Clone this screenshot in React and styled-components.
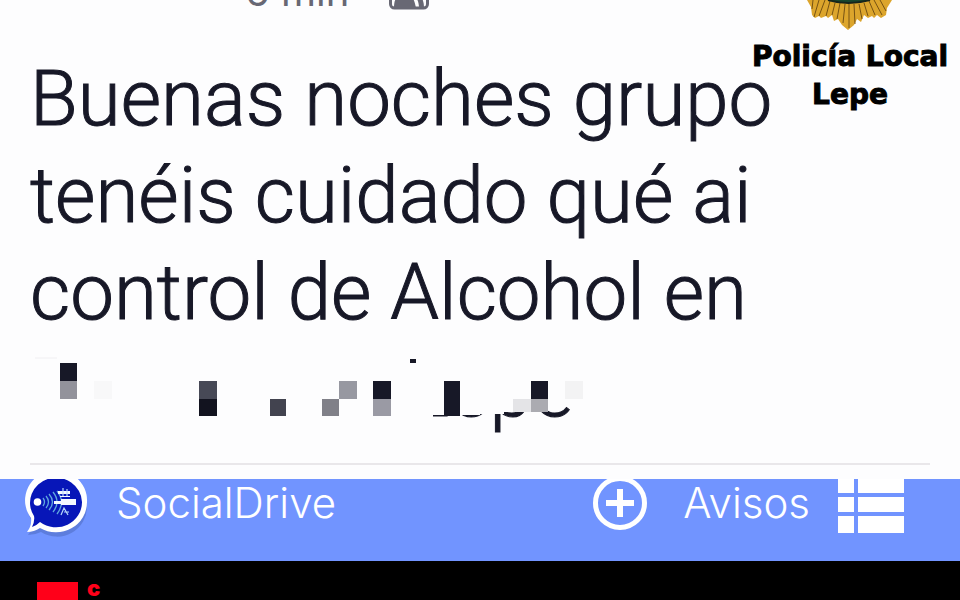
import React from 'react';
import styled, { createGlobalStyle } from 'styled-components';

const GlobalStyle = createGlobalStyle`
  * {
    box-sizing: border-box;
  }
  body {
    margin: 0;
    background-color: #000;
    font-family: Inter, 'Liberation Sans', sans-serif;
  }
`;

const Page = styled.main`
  position: relative;
  height: 100vh;
  overflow: hidden;
  background-color: #000;
`;

const Post = styled.article`
  padding: 0 30px 14px;
  background-color: #fdfdfe;
`;

const Meta = styled.div`
  display: flex;
  align-items: flex-end;
  gap: 40px;
  height: 10px;
  margin-bottom: 40px;
  padding-left: 215px;
  overflow: hidden;
  font-size: 40px;
  line-height: 36px;
  color: #686874;
`;

const Message = styled.p`
  margin: 0;
  font-family: Roboto, Inter, sans-serif;
  font-size: 78px;
  font-weight: 300;
  line-height: 97px;
  color: #171827;
  -webkit-text-stroke: 1px #171827;
`;

const Redacted = styled(Message)`
  position: relative;
  padding-left: 378px;
`;

const Mosaic = styled.svg`
  position: absolute;
  top: 0;
  left: 0;
`;

const Divider = styled.hr`
  margin: 25px 0 0;
  border: 0;
  border-top: 2px solid #e9e7ea;
`;

const Brand = styled.aside`
  position: absolute;
  top: 0;
  right: 10px;
  width: 200px;
  font-family: 'DejaVu Sans', sans-serif;
  font-size: 28px;
  font-weight: 700;
  line-height: 38px;
  color: #000;
  text-align: center;
  white-space: nowrap;
  -webkit-text-stroke: 1px #000;
`;

const Crest = styled.svg`
  display: block;
  margin: 0 auto 6px;
`;

const Bar = styled.nav`
  display: flex;
  align-items: flex-start;
  padding: 0 56px 24px 24px;
  background-color: #7194ff;
`;

const BarLink = styled.a`
  display: flex;
  align-items: flex-start;
  gap: 28px;
  margin-right: ${props => (props.$first ? 'auto' : '0')};
  font-size: 42px;
  font-weight: 350;
  line-height: 48px;
  color: #fff;
  text-decoration: none;
`;

const AddButton = styled.button`
  margin: 0 36px 0 0;
  padding: 0;
  border: 0;
  background: transparent;
  cursor: pointer;
`;

const Icon = styled.svg`
  display: block;
  flex: none;
`;

const Footer = styled.footer`
  display: flex;
  gap: 9px;
  padding: 21px 37px 0;
  font-size: 22px;
  font-weight: 900;
  line-height: 12px;
  color: #ff0019;
`;

const Swatch = styled.span`
  width: 41px;
  height: 41px;
  background-color: #ff0019;
`;

const blocks = [
  [30, 18, 17, 18, '#171827'],
  [30, 36, 17, 18, '#92929b'],
  [64, 36, 18, 18, '#f8f8f9'],
  [169, 36, 18, 18, '#474956'],
  [169, 54, 18, 17, '#12131f'],
  [240, 54, 16, 17, '#42434f'],
  [309, 36, 18, 18, '#9798a1'],
  [292, 54, 17, 17, '#808088'],
  [343, 36, 18, 18, '#171827'],
  [343, 54, 18, 17, '#9a9aa4'],
  [414, 36, 16, 35, '#171827'],
  [501, 36, 17, 18, '#171827'],
  [483, 54, 18, 13, '#e4e4e7'],
  [501, 54, 17, 13, '#ababb1'],
  [535, 36, 18, 18, '#f3f3f4'],
];

function Friends() {
  return (
    <Icon width="40" height="24" viewBox="0 0 40 24" fill="none">
      <rect x="1.5" y="-14" width="37" height="36" rx="4" stroke="#686874" strokeWidth="3" />
      <path d="M5 22c0-6 1-9 4-12h13c3 3 4 7 5 12zM25 9h5c4 3 5 8 5 13h-5c0-6-2-10-5-13z" fill="#686874" />
    </Icon>
  );
}

function Logo() {
  return (
    <Icon width="64" height="58" viewBox="24 479 64 58">
      <path d="M86 504a30 30 0 0 1-46 26q-6 3-13 3 5-6 4-14a30 30 0 1 1 55-15" fill="#39549d" opacity=".35" transform="translate(1 2)" />
      <path d="M87 502a31 30 0 0 1-47 26q-6 4-13 4 5-6 4-14a31 30 0 1 1 56-16" fill="#fff" />
      <path d="M82 502a26 25 0 0 1-42 20q-4 4-8 5 3-6 2-11a26 25 0 1 1 48-14" fill="#0716b8" />
      <circle cx="37.5" cy="502" r="3.8" fill="#fff" />
      <g fill="none" stroke="#61a8dd" strokeWidth="1.3">
        <path d="M43 498q3 4 0 8M46 496q5 6 0 12M49 494q7 8 0 16M53 492q8 10 0 20M57 491q9 11 0 23" />
      </g>
      <path d="M61 499h15v6H61v-1h-7v-3h7zM58 491h12v3H58zM60 496h10v1H60z" fill="#f4f9ff" />
      <path d="M63 488v8M67 489v7M61 515l3-7 4 7M64 512h5" fill="none" stroke="#b8d8fa" strokeWidth="1.2" />
    </Icon>
  );
}

function App() {
  return (
    <>
      <GlobalStyle />
      <Page>
        <Post>
          <Meta>
            <span>6 min</span>
            <Friends />
          </Meta>
          <Message>
            Buenas noches grupo
            <br />
            tenéis cuidado qué ai
            <br />
            control de Alcohol en
          </Message>
          <Redacted>
            Lepe
            <Mosaic width="600" height="97" viewBox="0 -4 600 97">
              <path d="M0 -4H600V60H543L513 67L495 66L492 67H474V69H450V70H403V100H0z" fill="#fdfdfe" />
              <path d="M380 14h6v4h-6z" fill="#171827" />
              <path d="M5 13h22" stroke="#f0eff2" />
              {blocks.map(([x, y, w, h, fill]) => (
                <rect key={`${x}-${y}`} x={x} y={y} width={w} height={h} fill={fill} />
              ))}
            </Mosaic>
          </Redacted>
          <Divider />
        </Post>
        <Brand>
          <Crest width="86" height="32" viewBox="807 0 86 32">
            <path
              d="M807 0l4 7 1 8 3 3 4-2 2 2 5-2 2 2 4-3 2 6 4-2 4 6 6 5 6-5 3-6 4 3 3-7 4 3 4-2 2 2 3-3 4 3 5-3 1-7 5-8z"
              fill="#dca52c"
            />
            <path
              d="M819 0l-5 17M825 0l-6 16M830 1l-4 15M835 3l-3 12M840 3l-3 16M845 4l-2 19M849 4v24M854 4l1 20M859 4l3 15M864 3l4 13M869 1l6 14M874 0l8 15M880 0l6 11M813 0l-1 9"
              stroke="#765213"
              strokeWidth="1"
            />
            <path d="M828 0q20 6 42 0" fill="#17472f" stroke="#16251c" strokeWidth="2" />
          </Crest>
          Policía Local
          <br />
          Lepe
        </Brand>
        <Bar>
          <BarLink href="#socialdrive" $first>
            <Logo />
            SocialDrive
          </BarLink>
          <AddButton type="button" aria-label="Añadir">
            <Icon width="54" height="52" viewBox="0 -24 54 52" fill="none" stroke="#fff">
              <circle cx="27" cy="0" r="24.5" strokeWidth="5" />
              <path d="M13 0h28M27-14v28" strokeWidth="6" />
            </Icon>
          </AddButton>
          <BarLink href="#avisos">
            Avisos
            <Icon width="66" height="54" viewBox="0 0 66 54" fill="#fff">
              <path d="M0 0h16v14H0zM20 0h46v14H20zM0 18h16v15H0zM20 18h46v15H20zM0 37h16v17H0zM20 37h46v17H20z" />
            </Icon>
          </BarLink>
        </Bar>
        <Footer>
          <Swatch />
          <span>c</span>
        </Footer>
      </Page>
    </>
  );
}

export default App;
